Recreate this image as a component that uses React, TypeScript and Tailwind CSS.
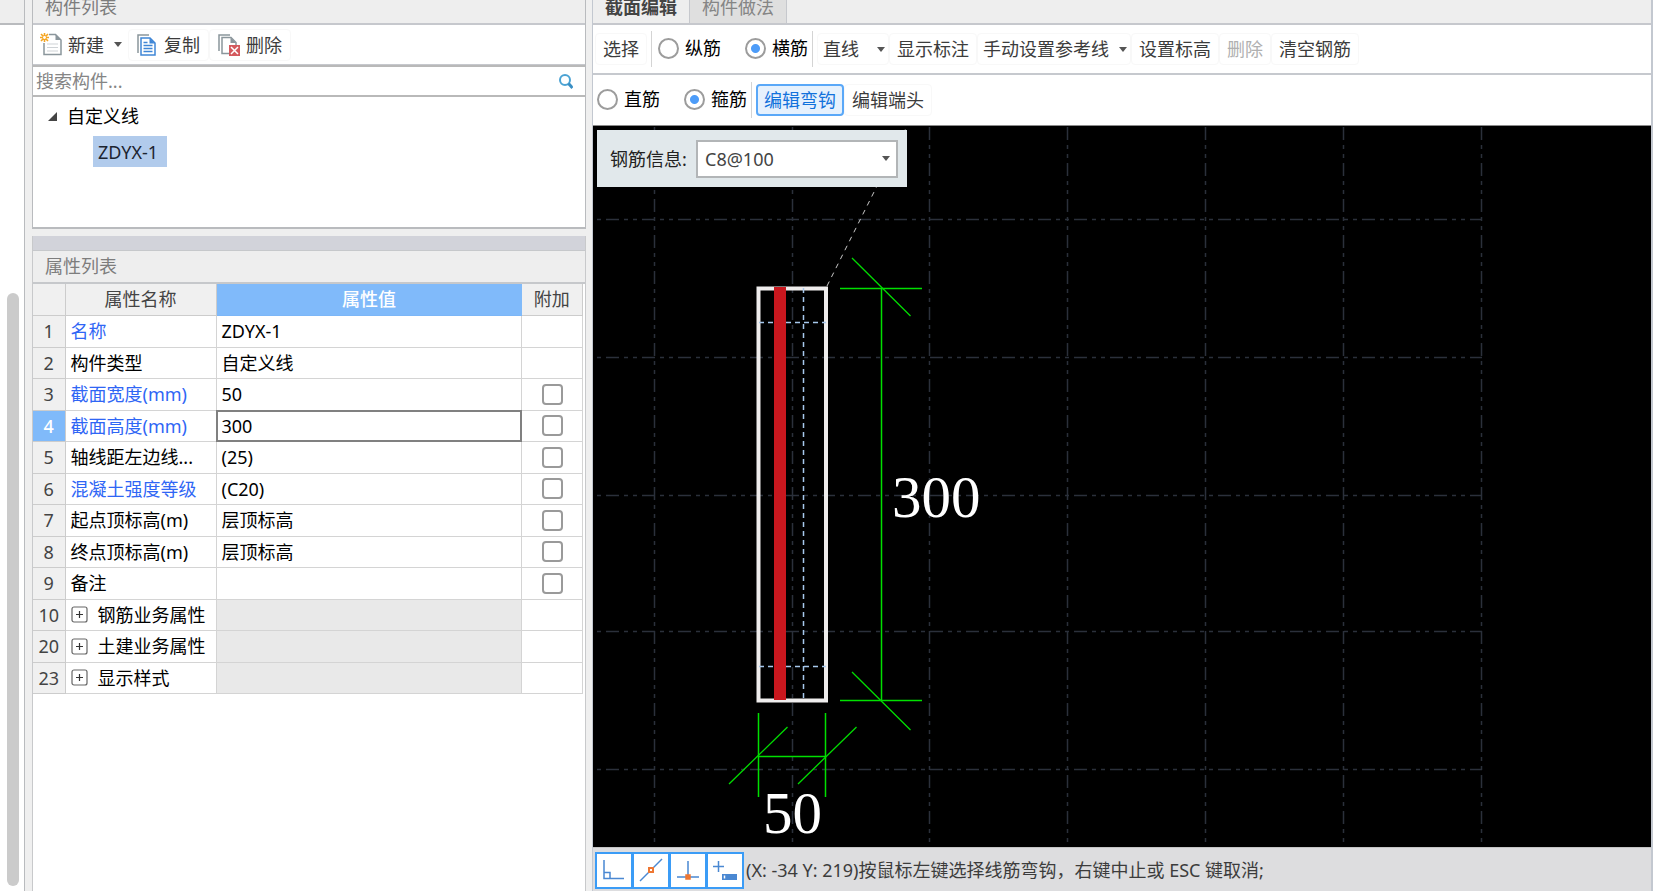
import { useState } from "react";
import type { ReactNode } from "react";

type Row = {
  no: number;
  name: string;
  value?: string;
  key?: boolean;
  extra?: boolean;
  group?: boolean;
};

const ROWS: Row[] = [
  { no: 1, name: "名称", value: "ZDYX-1", key: true },
  { no: 2, name: "构件类型", value: "自定义线" },
  { no: 3, name: "截面宽度(mm)", value: "50", key: true, extra: true },
  { no: 4, name: "截面高度(mm)", value: "300", key: true, extra: true },
  { no: 5, name: "轴线距左边线...", value: "(25)", extra: true },
  { no: 6, name: "混凝土强度等级", value: "(C20)", key: true, extra: true },
  { no: 7, name: "起点顶标高(m)", value: "层顶标高", extra: true },
  { no: 8, name: "终点顶标高(m)", value: "层顶标高", extra: true },
  { no: 9, name: "备注", value: "", extra: true },
  { no: 10, name: "钢筋业务属性", group: true },
  { no: 20, name: "土建业务属性", group: true },
  { no: 23, name: "显示样式", group: true },
];

const GRID_X = [61.5, 199.5, 336.5, 474.5, 612.5, 750.5, 888.5];
const GRID_Y = [93.5, 231.5, 369.5, 505.5, 643.5];

function Caret() {
  return (
    <svg width="8" height="5" viewBox="0 0 8 5" className="shrink-0">
      <path d="M0 0h8L4 5z" fill="#555" />
    </svg>
  );
}

function NewIcon() {
  return (
    <svg width="22" height="23" viewBox="0 0 22 23" fill="none" className="shrink-0">
      <path d="M4 10v11.5h17V7l-5.5-5.5H9" fill="#fff" />
      <path d="M4 10v11.5h17V7l-5.5-5.5H9" stroke="#8b969c" strokeWidth="1.5" />
      <path d="M15.5 1.5V7H21z" fill="#8b969c" />
      <path d="M7 11h11M7 14.5h11M7 18h11" stroke="#cfd3d6" />
      <path d="M4.500 0v9M0 4.500h9M1 1l7 7M8 1L1 8" stroke="#f5a623" strokeWidth="1.6" />
      <circle cx="4.5" cy="4.5" r="1.4" fill="#fff" />
    </svg>
  );
}

function CopyIcon() {
  return (
    <svg width="19" height="22" viewBox="0 0 19 22" fill="none" className="shrink-0">
      <path d="M1 19V1h11" stroke="#8b969c" strokeWidth="1.5" />
      <path d="M4 4h9l5 5v12H4z" fill="#fff" stroke="#3f86d6" strokeWidth="1.5" />
      <path d="M12.5 4v5.5H18z" fill="#3f86d6" />
      <path d="M6.5 8.5h4M6.5 11.5h9M6.5 14.5h9M6.5 17.5h9" stroke="#3f86d6" strokeWidth="1.5" />
    </svg>
  );
}

function DeleteIcon() {
  return (
    <svg width="22" height="22" viewBox="0 0 22 22" fill="none" className="shrink-0">
      <path d="M1 17V1h11" stroke="#8b969c" strokeWidth="1.5" />
      <path d="M4 19.5V3.5h9l5 5v11z" fill="#fff" stroke="#8b969c" strokeWidth="1.5" />
      <path d="M12.5 3.5V9H18z" fill="#8b969c" />
      <path d="M11 11h11v11H11z" fill="#d45a5e" />
      <path d="M13 13l7 7M20 13l-7 7" stroke="#fff" strokeWidth="1.5" />
    </svg>
  );
}

function ToolButton({ children, disabled }: { children: ReactNode; disabled?: boolean }) {
  return (
    <button
      disabled={disabled}
      className="flex h-8 shrink-0 items-center rounded border border-[#f8f8f8] px-[7px] text-[#3c3c3c] disabled:text-[#b0b0b0]"
    >
      {children}
    </button>
  );
}

function MenuButton({ children }: { children: ReactNode }) {
  return (
    <button className="flex h-8 shrink-0 items-center rounded border border-[#f8f8f8] pr-[3px] pl-[5px] text-[#3c3c3c]">
      {children}
    </button>
  );
}

function Radio({ name, label, checked, onChange }: { name: string; label: string; checked: boolean; onChange: () => void }) {
  return (
    <label className="flex shrink-0 items-center gap-[6px] text-black">
      <input
        type="radio"
        name={name}
        checked={checked}
        onChange={onChange}
        className="size-[21px] appearance-none rounded-full border-2 border-[#9c9c9c] bg-white checked:bg-[radial-gradient(circle,#4d9cf8_4px,#fff_5px)]"
      />
      {label}
    </label>
  );
}

function Divider() {
  return <div className="h-9 w-px shrink-0 bg-[#d4d4d4]" />;
}

function ComponentList() {
  return (
    <section className="flex h-[229px] flex-col border-x border-b-2 border-[#b9bbbe] bg-white">
      <h2 className="h-[25px] shrink-0 border-b-2 border-[#c6c8cd] bg-[#eee] pl-3 leading-[14px] text-[#7d7d7d]">构件列表</h2>
      <div className="flex h-10 shrink-0 items-center border-b border-[#c6c8cd]">
        <button className="flex items-center gap-[6px] pl-[7px] text-[#3c3c3c]">
          <NewIcon />
          新建
        </button>
        <button aria-label="新建选项" className="flex h-8 w-6 items-center justify-center pl-1">
          <Caret />
        </button>
        <button className="flex h-8 items-center gap-2 rounded border border-[#f8f8f8] px-2 text-[#3c3c3c]">
          <CopyIcon />
          复制
        </button>
        <button className="flex h-8 items-center gap-[6px] rounded border border-[#f8f8f8] px-2 text-[#3c3c3c]">
          <DeleteIcon />
          删除
        </button>
      </div>
      <div className="flex h-8 shrink-0 items-center border-y-2 border-[#b9b9b9] pr-3 pl-[3px]">
        <input
          aria-label="搜索构件"
          placeholder="搜索构件..."
          className="min-w-0 flex-1 bg-transparent outline-none placeholder:text-[#858585]"
        />
        <svg width="14" height="15" viewBox="0 0 14 15" fill="none">
          <circle cx="6" cy="6" r="5" stroke="#4ba3d4" strokeWidth="2" />
          <path d="M9.5 9.5l4 4.5" stroke="#3a8fc4" strokeWidth="3" />
        </svg>
      </div>
      <ul className="pt-[3px] text-black">
        <li>
          <div className="flex h-8 items-center gap-[10px] pl-[15px]">
            <svg width="9" height="9" viewBox="0 0 9 9">
              <path d="M9 0v9H0z" fill="#444" />
            </svg>
            自定义线
          </div>
          <ul className="mt-1 pl-[60px]">
            <li>
              <button className="h-[31px] bg-[#b1cbec] pr-[9px] pl-[5px] text-[#1c2430]">ZDYX-1</button>
            </li>
          </ul>
        </li>
      </ul>
    </section>
  );
}

function PropertyList() {
  const [height, setHeight] = useState("300");

  return (
    <section className="flex min-h-0 flex-1 flex-col border-x border-[#c8c9cb] bg-white">
      <div className="h-[14px] shrink-0 bg-[#d2d3da]" />
      <h2 className="h-[34px] shrink-0 border-t border-b-2 border-[#c6c8cb] bg-[#eee] pl-3 leading-[30px] text-[#7d7d7d]">属性列表</h2>
      <div className="pr-[2px]">
        <table className="w-full table-fixed border-collapse">
          <colgroup>
            <col className="w-8" />
            <col className="w-[151px]" />
            <col />
            <col className="w-[61px]" />
          </colgroup>
          <thead>
            <tr className="h-[31px] bg-[#f0f0f0] text-[#444]">
              <th className="border-r border-b border-[#ccc]" />
              <th className="border-r border-b border-[#ccc] p-0 font-normal">属性名称</th>
              <th className="border-b border-[#7cb6f7] bg-[#80bafa] p-0 font-medium text-white">属性值</th>
              <th className="border-r border-b border-[#ccc] p-0 font-normal">附加</th>
            </tr>
          </thead>
          <tbody>
            {ROWS.map((r) => (
              <tr key={r.no} className="text-black odd:h-8 even:h-[31px]">
                <td
                  className={`border-r border-b border-[#ccc] p-0 text-center ${
                    r.no === 4 ? "bg-[#80bafa] font-medium text-white" : "bg-[#f0f0f0] text-[#444]"
                  }`}
                >
                  {r.no}
                </td>
                <td className={`overflow-hidden border-r border-b border-[#d4d4d4] p-0 pl-[5px] whitespace-nowrap ${r.key ? "text-[#2f66f5]" : ""}`}>
                  {r.group ? (
                    <button className="flex items-center gap-[10px]">
                      <svg width="17" height="17" viewBox="0 0 17 17" fill="none">
                        <rect x="1" y="1" width="15" height="15" rx="2" stroke="#666" strokeWidth="1.2" />
                        <path d="M5 8.5h7M8.5 5v7" stroke="#333" strokeWidth="1.2" />
                      </svg>
                      {r.name}
                    </button>
                  ) : (
                    r.name
                  )}
                </td>
                <td className={`border-r border-b border-[#d4d4d4] p-0 ${r.group ? "bg-[#e9e9e9]" : ""}`}>
                  {r.no === 4 ? (
                    <input
                      aria-label={r.name}
                      value={height}
                      onChange={(e) => setHeight(e.target.value)}
                      className="block h-[30px] w-full px-[5px] outline-2 -outline-offset-1 outline-[#808080]"
                    />
                  ) : (
                    <div className="px-[5px]">{r.value}</div>
                  )}
                </td>
                <td className="border-r border-b border-[#d4d4d4] p-0">
                  {r.extra && (
                    <input
                      type="checkbox"
                      aria-label={`附加 ${r.name}`}
                      className="mx-auto block size-[21px] appearance-none rounded border-2 border-[#9a9a9a] bg-white checked:bg-[#80bafa]"
                    />
                  )}
                </td>
              </tr>
            ))}
          </tbody>
        </table>
      </div>
    </section>
  );
}

function SectionDrawing() {
  return (
    <svg className="block h-full w-full" fill="none">
      <g stroke="#2b303b" strokeWidth="1.5">
        {GRID_X.map((x) => (
          <line key={x} x1={x} y1="1" x2={x} y2="717" strokeDasharray="13 5 4 5 4 5" />
        ))}
        {GRID_Y.map((y) => (
          <line key={y} x1="4" y1={y} x2="889" y2={y} strokeDasharray="13 5 4 5 4 5" strokeDashoffset="27" />
        ))}
      </g>
      <line x1="234" y1="160" x2="314" y2="0" stroke="#c8c8c8" strokeDasharray="5 5" />
      <rect x="165.5" y="162.5" width="67.5" height="412" stroke="#efeded" strokeWidth="4" />
      <g stroke="#a6c8ec" strokeWidth="1.5" strokeDasharray="5 4">
        <path d="M210.5 162v412" />
        <path d="M166 196.500h67M166 540.500h67" />
      </g>
      <rect x="181" y="161" width="12" height="413" fill="#c8171e" />
      <g stroke="#00e000" strokeWidth="1.5">
        <path d="M247 162.5h82M247 574.5h82M288.500 162v413" />
        <path d="M165.5 587v84M232.500 587v84M165 630.500h68" />
      </g>
      <g stroke="#00dc00" strokeWidth="1.3">
        <path d="M259 132l58.500 58M259 546l58.500 58" />
        <path d="M136 658l58.500-57M205 658l58.500-57" />
      </g>
      <g fill="#fff" fontFamily="Liberation Serif, serif" fontSize="59">
        <text x="299" y="391">300</text>
        <text x="170" y="707">50</text>
      </g>
    </svg>
  );
}

function SnapButton({ label, children }: { label: string; children: ReactNode }) {
  return (
    <button aria-label={label} className="flex h-[37px] w-[38px] shrink-0 items-center justify-center border-2 border-[#3b9cf6] bg-white not-first:-ml-px">
      <svg width="24" height="24" viewBox="0 0 24 24" fill="none" stroke="#4a88d2" strokeWidth="1.5">
        {children}
      </svg>
    </button>
  );
}

function StatusBar() {
  return (
    <footer className="flex h-11 shrink-0 items-center border-t border-[#c4c4c4] bg-[#dddddf] pt-px pl-[2px] text-[#3c3c3c]">
      <div className="flex">
        <SnapButton label="正交">
          <path d="M2 2v18.500h20M2 14.500h6v6" />
        </SnapButton>
        <SnapButton label="中点">
          <path d="M1 23L23 1" />
          <rect x="10" y="10" width="4" height="4" fill="#fff" stroke="#ee7733" strokeWidth="2" />
        </SnapButton>
        <SnapButton label="垂点">
          <path d="M12 3v16M1 19h22" />
          <rect x="10" y="17" width="4" height="4" fill="#ee7733" stroke="#ee7733" />
        </SnapButton>
        <SnapButton label="动态输入">
          <path d="M0 8.500h11M5.500 3v11" />
          <rect x="9" y="16" width="15" height="6" fill="#4a88d2" stroke="none" />
          <path d="M11.500 17.500v3" stroke="#fff" />
        </SnapButton>
      </div>
      <span className="ml-[2px] whitespace-nowrap">(X: -34 Y: 219)按鼠标左键选择线筋弯钩，右键中止或 ESC 键取消;</span>
    </footer>
  );
}

function SectionEditor() {
  const [direction, setDirection] = useState("横筋");
  const [kind, setKind] = useState("箍筋");

  return (
    <main className="flex min-w-0 flex-1 flex-col border-r-2 border-l border-[#c3c8d0] bg-white">
      <div className="flex h-[25px] shrink-0 border-b-2 border-[#c6c8cd] bg-[#eee] leading-[14px]">
        <button className="flex items-start border-r border-[#c6c8cd] px-3 font-bold text-[#444]">截面编辑</button>
        <button className="flex items-start border-r border-[#c6c8cd] bg-[#dfdfdf] px-3 text-[#858585]">构件做法</button>
      </div>

      <div className="flex h-[50px] shrink-0 items-center border-b-2 border-[#c6c9ce] pl-[2px]">
        <ToolButton>选择</ToolButton>
        <div className="mr-[6px] ml-1">
          <Divider />
        </div>
        <div className="flex gap-6 pb-[2px]">
          <Radio name="direction" label="纵筋" checked={direction === "纵筋"} onChange={() => setDirection("纵筋")} />
          <Radio name="direction" label="横筋" checked={direction === "横筋"} onChange={() => setDirection("横筋")} />
        </div>
        <div className="mr-1 ml-1">
          <Divider />
        </div>
        <MenuButton>
          <span className="flex items-center gap-[18px]">
            直线 <Caret />
          </span>
        </MenuButton>
        <ToolButton>显示标注</ToolButton>
        <MenuButton>
          <span className="flex items-center gap-[10px]">
            手动设置参考线 <Caret />
          </span>
        </MenuButton>
        <ToolButton>设置标高</ToolButton>
        <ToolButton disabled>删除</ToolButton>
        <ToolButton>清空钢筋</ToolButton>
      </div>

      <div className="flex h-[51px] shrink-0 items-center border-b border-[#8a8a8a] pl-1">
        <div className="flex gap-6 pb-[2px]">
          <Radio name="kind" label="直筋" checked={kind === "直筋"} onChange={() => setKind("直筋")} />
          <Radio name="kind" label="箍筋" checked={kind === "箍筋"} onChange={() => setKind("箍筋")} />
        </div>
        <div className="mr-1 ml-1">
          <Divider />
        </div>
        <button className="h-8 shrink-0 rounded border-2 border-[#5aa8f8] bg-[#e6f1fd] px-[6px] leading-7 text-[#1272dc]">编辑弯钩</button>
        <ToolButton>编辑端头</ToolButton>
      </div>

      <div className="relative min-h-0 flex-1 overflow-hidden bg-black">
        <SectionDrawing />
        <label className="absolute top-1 left-1 flex h-[57px] w-[310px] items-center justify-between bg-[#e1e8eb] pr-[9px] pl-[13px] text-[#222]">
          钢筋信息:
          <span className="relative flex w-[202px] items-center">
            <select className="h-[38px] w-full appearance-none border-2 border-[#b2b5b7] bg-white pl-[7px] text-[#444] outline-none">
              <option>C8@100</option>
            </select>
            <span className="pointer-events-none absolute right-2 flex">
              <Caret />
            </span>
          </span>
        </label>
      </div>

      <StatusBar />
    </main>
  );
}

export default function App() {
  return (
    <div className="flex h-screen overflow-hidden bg-[#efefef] font-['Noto_Sans','Noto_Sans_CJK_SC',sans-serif] text-[18px] leading-6">
      <aside className="flex w-[25px] shrink-0 flex-col border-r border-[#b9bbbe] bg-white">
        <div className="h-[25px] shrink-0 border-b-2 border-[#b9bbbe] bg-[#eee]" />
        <div className="mt-[268px] mb-[5px] ml-[7px] w-3 flex-1 rounded-full bg-[#cbcbcb]" />
      </aside>
      <div className="ml-[7px] flex w-[554px] shrink-0 flex-col gap-[7px]">
        <ComponentList />
        <PropertyList />
      </div>
      <div className="w-[6px] shrink-0" />
      <SectionEditor />
    </div>
  );
}
